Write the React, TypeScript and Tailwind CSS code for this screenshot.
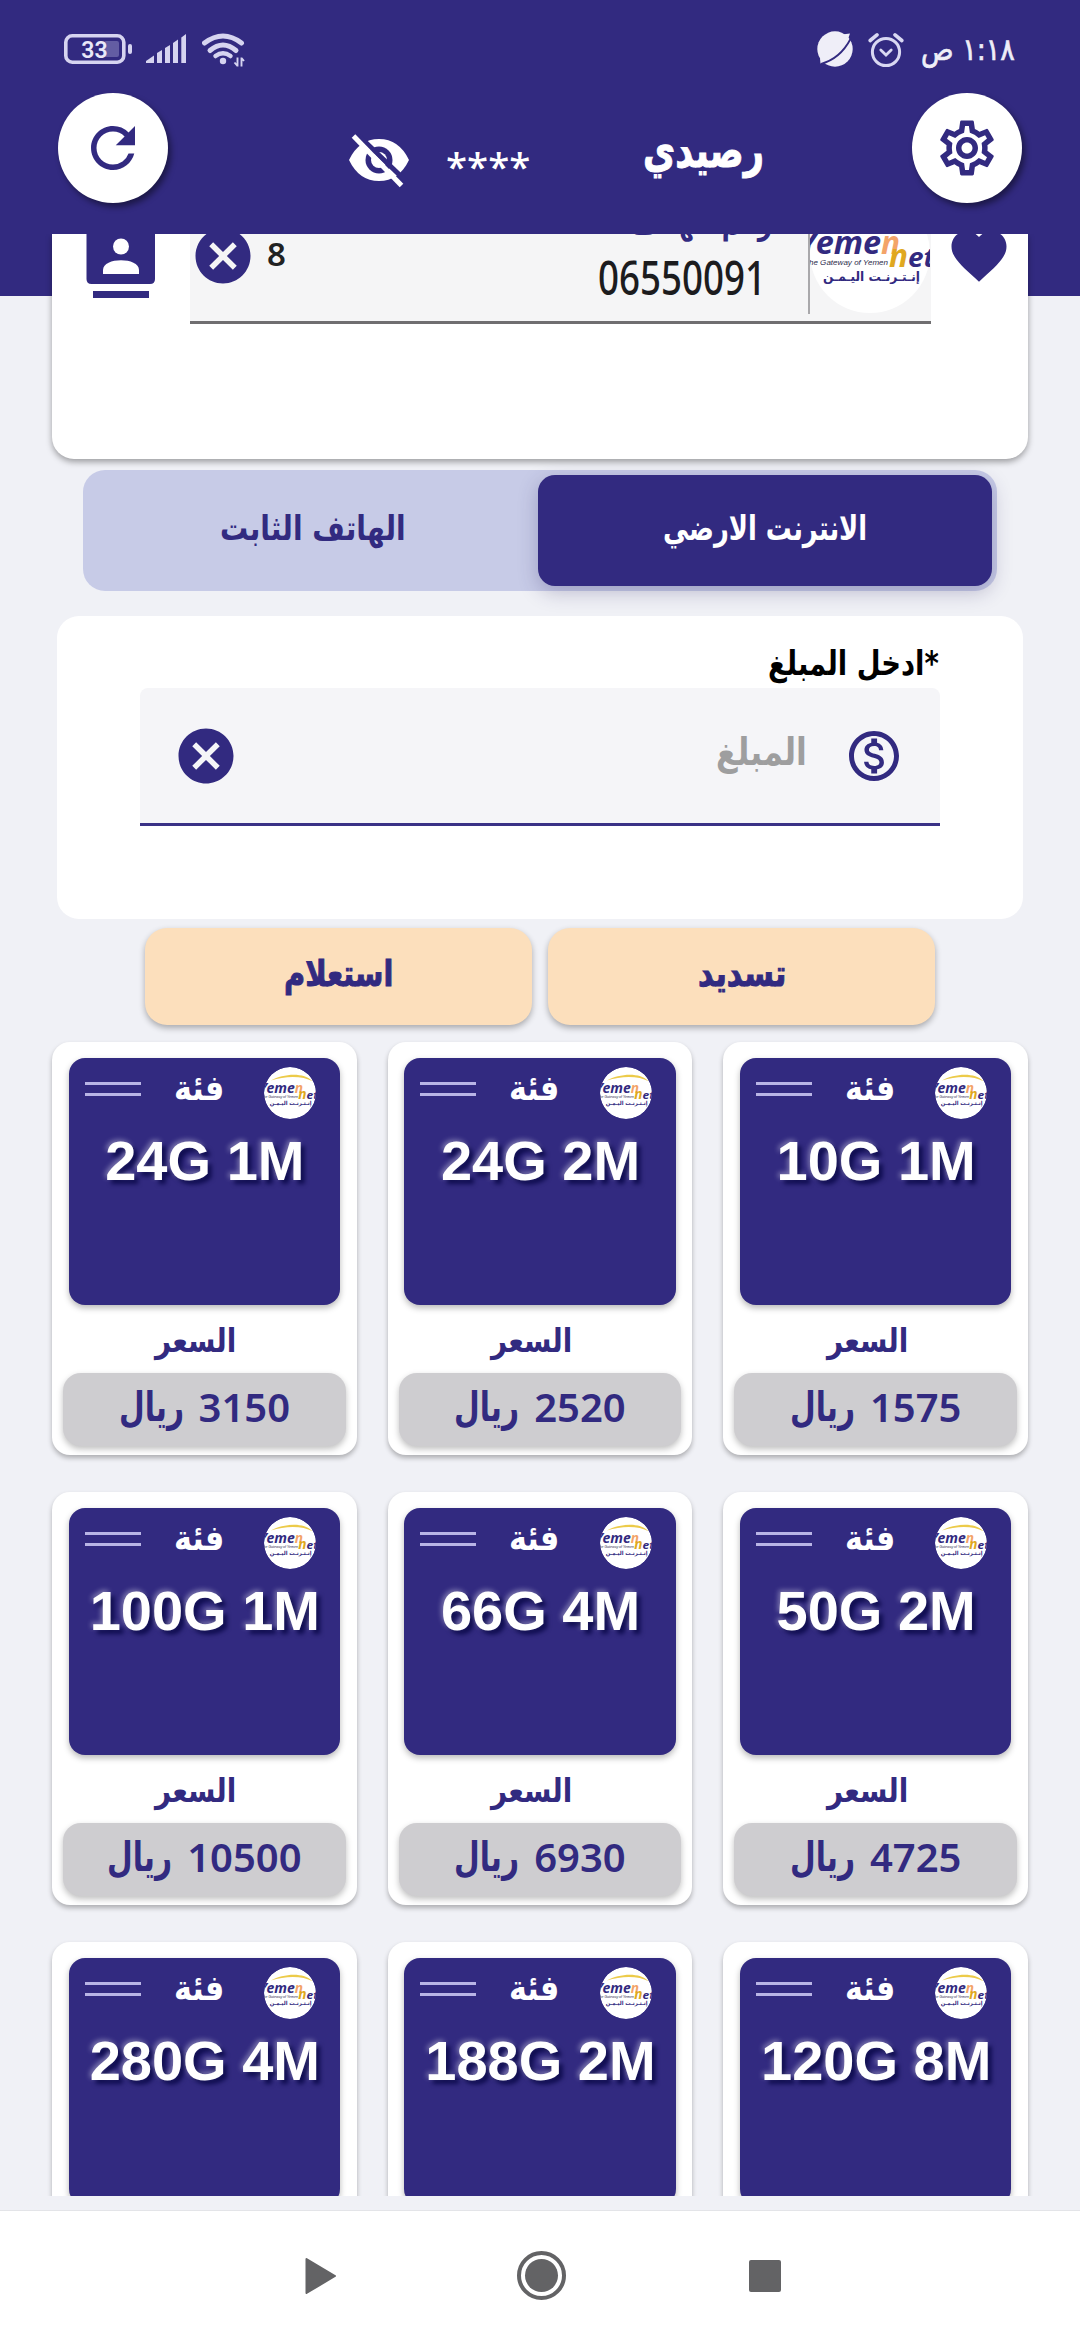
import React, { useLayoutEffect, useRef, useState } from 'react';
import { MdCancel, MdFavorite, MdOutlineMonetizationOn, MdOutlineSettings, MdRefresh } from 'react-icons/md';

interface Plan {
  name: string;
  price: string;
}

const PLANS: Plan[] = [
  { name: '24G 1M', price: '3150' },
  { name: '24G 2M', price: '2520' },
  { name: '10G 1M', price: '1575' },
  { name: '100G 1M', price: '10500' },
  { name: '66G 4M', price: '6930' },
  { name: '50G 2M', price: '4725' },
  { name: '280G 4M', price: '' },
  { name: '188G 2M', price: '' },
  { name: '120G 8M', price: '' },
];

interface FitProps {
  width: number;
  className?: string;
  dir?: 'rtl' | 'ltr';
  children: React.ReactNode;
}

// One line of text squeezed horizontally to a fixed width
function Fit({ width, className = '', dir = 'rtl', children }: FitProps) {
  const ref = useRef<HTMLSpanElement>(null);
  const [scale, setScale] = useState(1);

  useLayoutEffect(() => {
    if (ref.current) setScale(width / ref.current.offsetWidth);
  }, [width]);

  return (
    <div dir="ltr" className={`flex shrink-0 ${className}`} style={{ width }}>
      <span
        ref={ref}
        dir={dir}
        className="block shrink-0 whitespace-nowrap origin-left"
        style={{ transform: `scaleX(${scale})` }}
      >
        {children}
      </span>
    </div>
  );
}

function YemenNetLogo({ className }: { className: string }) {
  return (
    <svg viewBox="0 0 120 120" className={className}>
      <circle cx="60" cy="60" r="60" fill="#fff" />
      <path d="M16 31 C45 15 92 11 112 33 C90 20 50 20 16 31Z" fill="#eccb4a" />
      <g fontFamily="'Noto Sans', sans-serif" fontWeight="700" fontStyle="italic">
        <text x="-11" y="61" fontSize="32" fill="#322a80" textLength="82" lengthAdjust="spacingAndGlyphs">Yeme</text>
        <text x="71" y="61" fontSize="32" fill="#f3a469" textLength="19" lengthAdjust="spacingAndGlyphs">n</text>
        <text x="79" y="74" fontSize="32" fill="#e0a820" textLength="19" lengthAdjust="spacingAndGlyphs">n</text>
        <text x="98" y="74" fontSize="26" fill="#322a80" textLength="27" lengthAdjust="spacingAndGlyphs">et</text>
      </g>
      <text x="-6" y="72" fontSize="8" fontStyle="italic" fontFamily="'Liberation Sans', sans-serif" fill="#2d2a4a" textLength="84">
        The Gateway of Yemen
      </text>
      <text x="61.5" y="88" textAnchor="middle" direction="rtl" fontSize="13" fontWeight="700" fontFamily="'DejaVu Sans', sans-serif" fill="#322a80" textLength="97" lengthAdjust="spacingAndGlyphs">
        إنـتـرنـت اليـمـن
      </text>
    </svg>
  );
}

function StatusBar() {
  return (
    <div className="h-[93px] flex items-start justify-between pl-[64px] pr-[65px] pt-[30px]">
      <div className="flex items-start">
        <svg viewBox="0 0 68 38" className="w-[68px] h-[38px]">
          <rect x="1.8" y="5.8" width="58" height="26.4" rx="6.5" fill="none" stroke="#d6d4f0" strokeWidth="3.6" />
          <rect x="40" y="11" width="15" height="16" rx="2" fill="#635da3" />
          <rect x="64" y="14" width="4" height="10" rx="2" fill="#d6d4f0" />
          <text x="30.5" y="28" textAnchor="middle" fontSize="23" fontWeight="600" fontFamily="Roboto, sans-serif" fill="#e9e8f8">33</text>
        </svg>
        <svg viewBox="0 0 40 38" className="w-[40px] h-[38px] ml-[14px]" fill="#d6d4f0">
          <path d="M0 33 V31 L8 25.5 V33Z" />
          <path d="M11 33 V23 L16 20 V33Z" />
          <path d="M19 33 V18 L24 15 V33Z" />
          <path d="M27 33 V13 L32 9.500 V33Z" />
          <path d="M35.300 33 V7.500 L40 4 V33Z" />
        </svg>
        <svg viewBox="0 0 44 38" className="w-[44px] h-[38px] ml-[16px]" fill="none" stroke="#d6d4f0" strokeWidth="5" strokeLinecap="round">
          <path d="M2.500 13 Q21 -1 39.500 13" />
          <path d="M8 20.500 Q21 9.500 34 20.500" />
          <path d="M13.500 26 Q21 20.500 28.500 26" strokeWidth="4.500" />
          <circle cx="21" cy="31" r="3.200" fill="#d6d4f0" stroke="none" />
          <path d="M35.500 27.500 V36.500 M35.500 36 L32.500 32.500 M39.500 36.500 V27.500 M39.500 28 L42 31" strokeWidth="1.900" strokeLinecap="butt" />
        </svg>
      </div>
      <div className="flex items-start">
        <svg viewBox="0 0 36 36" className="w-[36px] h-[36px] mt-px">
          <circle cx="18" cy="18" r="17.700" fill="#efeef8" />
          <path d="M25 3.500 L33 2.500 L31 8Z M3 27 L3.500 33 L9 31.500Z" fill="#efeef8" />
          <path d="M33.500 8 Q23 28 3.500 33" fill="none" stroke="#322a80" strokeWidth="1.800" />
        </svg>
        <svg viewBox="0 0 36 36" className="w-[36px] h-[36px] ml-[15px] mt-[2px]" fill="none" stroke="#d9d8f2" strokeLinecap="round">
          <circle cx="18" cy="20" r="13.600" strokeWidth="3" />
          <path d="M2.200 8.500 L9 2.800 M33.800 8.500 L27 2.800" strokeWidth="3.600" />
          <path d="M12.800 18 L18 23 L23.200 18" strokeWidth="2.800" />
        </svg>
        <Fit width={94} className="ml-[17px] text-[31px] leading-[38px] text-[#efeef8] font-['DejaVu_Sans',sans-serif] [-webkit-text-stroke:0.7px_#efeef8]">
          ١:١٨ ص
        </Fit>
      </div>
    </div>
  );
}

function Header() {
  return (
    <header className="h-[234px] bg-[#322a80] shrink-0">
      <StatusBar />
      <div className="flex items-start pl-[58px] pr-[58px]">
        <button className="size-[110px] rounded-full bg-white flex items-center justify-center shadow-[3px_4px_6px_rgba(0,0,0,0.45)]">
          <MdRefresh className="size-[66px] text-[#322a80]" />
        </button>
        <svg viewBox="0 0 62 56" className="w-[62px] h-[56px] ml-[180px] mt-[41px]">
          <path d="M1 26 Q11 5 31 5 Q51 5 61 26 Q51 47 31 47 Q11 47 1 26Z" fill="#fff" />
          <circle cx="31" cy="26" r="13.500" fill="#322a80" />
          <circle cx="31" cy="26" r="8" fill="#fff" />
          <path d="M11 2 L62 51" stroke="#322a80" strokeWidth="5" />
          <path d="M5.500 2 L53.500 51.500" stroke="#fff" strokeWidth="5" />
        </svg>
        <Fit width={84} dir="ltr" className="ml-[36px] mt-[53px] text-[38px] leading-[40px] font-medium text-white font-['Noto_Sans',sans-serif]">
          ****
        </Fit>
        <Fit width={121} className="ml-[113px] mt-[31px] text-[47px] leading-[54px] font-bold text-white font-['DejaVu_Sans',sans-serif] [-webkit-text-stroke:1px_#fff]">
          رصيدي
        </Fit>
        <button className="ml-auto size-[110px] rounded-full bg-white flex items-center justify-center shadow-[3px_4px_6px_rgba(0,0,0,0.45)]">
          <MdOutlineSettings className="size-[66px] text-[#322a80]" />
        </button>
      </div>
    </header>
  );
}

function NumberCard() {
  return (
    <section className="mx-[52px] h-[225px] shrink-0 rounded-b-[22px] bg-white shadow-[0_3px_6px_rgba(0,0,0,0.35)] flex items-start">
      <svg viewBox="0 0 70 64" className="w-[70px] h-[64px] ml-[34px]" fill="#322a80">
        <path d="M0.500 0 H69 V45 Q69 50 64 50 H5.500 Q0.500 50 0.500 45Z" />
        <rect x="7" y="57" width="56" height="7" />
        <circle cx="35" cy="12.500" r="8" fill="#fff" />
        <path d="M17 40 V36 C17 23 53 23 53 36 V40Z" fill="#fff" />
      </svg>
      <div className="ml-[34px] w-[741px] h-[90px] bg-[#f5f5f6] border-b-[3px] border-[#6f6e70] flex items-start overflow-hidden">
        <MdCancel className="size-[66px] text-[#322a80] -mt-[11px]" />
        <div className="ml-[11px] text-[33px] leading-[40px] font-semibold text-[#222] font-['Noto_Sans',sans-serif]">8</div>
        <div className="ml-auto mr-[34px] flex flex-col items-end">
          <Fit width={142} className="-mt-[31px] mr-[2px] text-[31px] leading-[40px] font-bold text-[#322a80] font-['DejaVu_Sans',sans-serif]">
            رقم الهاتف
          </Fit>
          <Fit width={168} dir="ltr" className="mt-[12px] mr-[8px] text-[47px] leading-[44px] font-medium text-[#1c1c1e] font-['Noto_Sans',sans-serif]">
            06550091
          </Fit>
        </div>
        <div className="w-[2px] h-[80px] bg-[#a9a8ab]" />
        <YemenNetLogo className="w-[120px] h-[120px] -mt-[41px] mr-px" />
      </div>
      <MdFavorite className="size-[66px] text-[#322a80] ml-[15px] -mt-[11px] [clip-path:inset(11px_0_0_0)]" />
    </section>
  );
}

function Tabs() {
  return (
    <div className="mx-[83px] mt-[11px] h-[121px] p-[5px] shrink-0 rounded-[22px] bg-[#c7cbe7] flex">
      <button className="flex-1 flex items-center justify-center pb-[6px]">
        <Fit width={186} className="text-[34px] leading-[40px] font-bold text-[#322a80] font-['DejaVu_Sans',sans-serif]">
          الهاتف الثابت
        </Fit>
      </button>
      <button className="w-[454px] rounded-[17px] bg-[#322a80] flex items-center justify-center pb-[6px] shadow-[0_6px_20px_rgba(50,42,100,0.28)]">
        <Fit width={204} className="text-[34px] leading-[40px] font-bold text-white font-['DejaVu_Sans',sans-serif]">
          الانترنت الارضي
        </Fit>
      </button>
    </div>
  );
}

function AmountCard() {
  return (
    <section className="mx-[57px] mt-[25px] h-[303px] shrink-0 rounded-[22px] bg-white relative">
      <div className="h-[72px] flex justify-end pr-[84px] pt-[27px]">
        <Fit width={171} className="text-[34px] leading-[40px] font-bold text-black font-['DejaVu_Sans',sans-serif]">
          *ادخل المبلغ
        </Fit>
      </div>
      <div className="mx-[83px] h-[138px] rounded-t-[8px] bg-[#f5f5f8] border-b-[3px] border-[#3a3186] flex items-center pl-[33px] pr-[36px]">
        <MdCancel className="size-[66px] text-[#322a80]" />
        <Fit width={91} className="ml-auto mr-[37px] mb-[8px] text-[38px] leading-[44px] font-bold text-[#9e9e9f] font-['DejaVu_Sans',sans-serif]">
          المبلغ
        </Fit>
        <MdOutlineMonetizationOn className="size-[60px] text-[#322a80]" />
      </div>
    </section>
  );
}

function Actions() {
  return (
    <div className="mx-[145px] mt-[9px] h-[97px] shrink-0 flex gap-[16px]">
      <button className="flex-1 rounded-[22px] bg-[#fcdfbc] flex items-center justify-center pb-[5px] shadow-[0_3px_6px_rgba(0,0,0,0.3)]">
        <Fit width={109} className="text-[36px] leading-[40px] font-bold text-[#322a80] font-['DejaVu_Sans',sans-serif] [-webkit-text-stroke:1px_#322a80]">
          استعلام
        </Fit>
      </button>
      <button className="flex-1 rounded-[22px] bg-[#fcdfbc] flex items-center justify-center pb-[5px] shadow-[0_3px_6px_rgba(0,0,0,0.3)]">
        <Fit width={88} className="text-[36px] leading-[40px] font-bold text-[#322a80] font-['DejaVu_Sans',sans-serif] [-webkit-text-stroke:1px_#322a80]">
          تسديد
        </Fit>
      </button>
    </div>
  );
}

function PlanCard({ plan }: { plan: Plan }) {
  return (
    <div className="h-[413px] rounded-[18px] bg-white shadow-[0_3px_5px_rgba(0,0,0,0.28)] px-[11px] pt-[16px]">
      <div className="mx-[5.5px] h-[247px] rounded-[16px] bg-[#322a80] shadow-[0_3px_6px_rgba(0,0,0,0.28)]">
        <div className="h-[70px] flex items-start">
          <div className="w-[56px] h-[14px] ml-[16px] mt-[24px] border-y-[3px] border-[#b9b5e6]" />
          <Fit width={50} className="ml-[33px] mt-[9px] text-[35px] leading-[42px] font-bold text-white font-['DejaVu_Sans',sans-serif]">
            فئة
          </Fit>
          <YemenNetLogo className="size-[52px] rounded-full ml-auto mr-[24px] mt-[9px]" />
        </div>
        <div className="mt-px pl-px text-center text-[56px] leading-[64px] font-bold text-white whitespace-nowrap font-['Liberation_Sans',sans-serif] [text-shadow:4px_4px_4px_rgba(0,0,60,0.7),-2px_-2px_5px_rgba(255,255,255,0.35)]">
          {plan.name}
        </div>
      </div>
      <div className="h-[68px] flex justify-center pt-[16px] pr-[17px]">
        <Fit width={81} className="text-[33px] leading-[40px] font-bold text-[#322a80] font-['DejaVu_Sans',sans-serif]">
          السعر
        </Fit>
      </div>
      <div className="h-[73px] rounded-[18px] bg-[#cecdd0] shadow-[0_3px_6px_rgba(0,0,0,0.25)] flex items-center justify-center gap-[15px] text-[#322a80] pb-[6px]">
        {plan.price && (
          <>
            <Fit width={65} className="text-[41px] leading-[44px] font-bold font-['DejaVu_Sans',sans-serif]">
              ريال
            </Fit>
            <span className="text-[40px] leading-[44px] font-semibold font-['Noto_Sans',sans-serif]">{plan.price}</span>
          </>
        )}
      </div>
    </div>
  );
}

function NavBar() {
  return (
    <nav className="h-[130px] bg-white border-t border-[#e3e4e8] shrink-0 flex items-center pl-[304px]">
      <svg viewBox="0 0 34 38" className="w-[34px] h-[38px]">
        <path d="M2.500 2 L31 19 L2.500 36Z" fill="#636365" stroke="#636365" strokeWidth="2" strokeLinejoin="round" />
      </svg>
      <div className="ml-[179px] size-[49px] rounded-full border-4 border-[#636365] flex items-center justify-center">
        <div className="size-[33px] rounded-full bg-[#636365]" />
      </div>
      <div className="ml-[183px] size-[32px] rounded-[2px] bg-[#636365]" />
    </nav>
  );
}

export default function App() {
  return (
    <div className="w-[1080px] h-[2340px] bg-[#f0f1f6] flex flex-col overflow-hidden">
      <Header />
      <main className="h-[1962px] shrink-0 overflow-hidden flex flex-col bg-[linear-gradient(#322a80_62px,#f0f1f6_62px)]">
        <NumberCard />
        <Tabs />
        <AmountCard />
        <Actions />
        <div className="mx-[52px] mt-[17px] grid grid-cols-3 gap-x-[31px] gap-y-[37px]">
          {PLANS.map(plan => (
            <PlanCard key={plan.name} plan={plan} />
          ))}
        </div>
      </main>
      <div className="h-[14px] shrink-0" />
      <NavBar />
    </div>
  );
}
